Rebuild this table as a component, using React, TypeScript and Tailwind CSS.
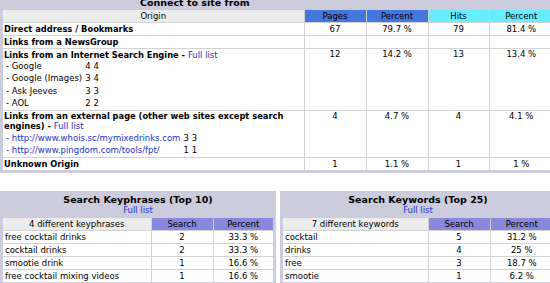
const origins = [
  { label: 'Direct address / Bookmarks', pages: '67', pp: '79.7 %', hits: '79', hp: '81.4 %' },
  { label: 'Links from a NewsGroup', pages: '', pp: '', hits: '', hp: '' },
];

const engines = [
  ['- Google', '4', '4'],
  ['- Google (Images)', '3', '4'],
  ['- Ask Jeeves', '3', '3'],
  ['- AOL', '2', '2'],
];

const referers = [
  ['- http://www.whois.sc/mymixedrinks.com', '3', '3'],
  ['- http://www.pingdom.com/tools/fpt/', '1', '1'],
];

const keyphrases = [
  ['free cocktail drinks', '2', '33.3 %'],
  ['cocktail drinks', '2', '33.3 %'],
  ['smootie drink', '1', '16.6 %'],
  ['free cocktail mixing videos', '1', '16.6 %'],
];

const keywords = [
  ['cocktail', '5', '31.2 %'],
  ['drinks', '4', '25 %'],
  ['free', '3', '18.7 %'],
  ['smootie', '1', '6.2 %'],
];

function Nums({ pages, pp, hits, hp, top, last }: { pages: string; pp: string; hits: string; hp: string; top?: boolean; last?: boolean }) {
  const cls = `border-l border-[#d2d2d2] text-center p-0 ${last ? '' : 'border-b'} ${top ? 'align-top' : 'align-middle'}`;
  return (
    <>
      <td className={cls}>{pages}</td>
      <td className={cls}>{pp}</td>
      <td className={cls}>{hits}</td>
      <td className={cls}>{hp}</td>
    </>
  );
}

function SubList({ rows, link, rowH }: { rows: string[][]; link?: boolean; rowH: string }) {
  return (
    <table className="font-normal text-[8.5px]">
      <tbody>
        {rows.map((r) => (
          <tr key={r[0]} className={rowH}>
            <td className={`p-0 pl-[2px] pr-[3px] ${link ? 'text-[#2233cc]' : ''}`}>{r[0]}</td>
            <td className="p-0 pr-[3px]">{r[1]}</td>
            <td className="p-0">{r[2]}</td>
          </tr>
        ))}
      </tbody>
    </table>
  );
}

function ConnectTable() {
  return (
    <div className="w-[556px] bg-[#ccccdd] -mt-[10px] pl-[3px] pb-[3px]">
      <div className="h-[20px] pt-[5px] leading-[16px] pl-[137px] text-[9.5px] font-bold">Connect to site from</div>
      <table className="w-[550px] table-fixed bg-white leading-[10px] text-[8.5px]">
        <colgroup>
          <col className="w-[301px]" />
          <col className="w-[62px]" />
          <col className="w-[62px]" />
          <col className="w-[61px]" />
          <col className="w-[64px]" />
        </colgroup>
        <tbody>
          <tr className="h-[12px]">
            <td className="bg-[#ececec] text-center p-0 border-b border-[#d2d2d2]">Origin</td>
            <td className="bg-[#4477dd] text-center p-0 border-l border-b border-[#d2d2d2]">Pages</td>
            <td className="bg-[#4477dd] text-center p-0 border-l border-b border-[#d2d2d2]">Percent</td>
            <td className="bg-[#66eeff] text-center p-0 border-l border-b border-[#d2d2d2]">Hits</td>
            <td className="bg-[#66eeff] text-center p-0 border-l border-b border-[#d2d2d2]">Percent</td>
          </tr>
          {origins.map((o) => (
            <tr key={o.label} className="h-[13px]">
              <td className="font-bold text-[8.3px] p-0 pl-[1px] border-b border-[#d2d2d2]">{o.label}</td>
              <Nums {...o} />
            </tr>
          ))}
          <tr className="h-[62px]">
            <td className="font-bold text-[8.3px] p-0 pl-[1px] align-top border-b border-[#d2d2d2]">
              <div className="pt-[1px]">
                Links from an Internet Search Engine - <span className="font-normal text-[8.5px] text-[#2233cc]">Full list</span>
              </div>
              <SubList rows={engines} rowH="h-[12.5px]" />
            </td>
            <Nums pages="12" pp="14.2 %" hits="13" hp="13.4 %" top />
          </tr>
          <tr className="h-[47px]">
            <td className="font-bold text-[8.3px] p-0 pl-[1px] align-top border-b border-[#d2d2d2]">
              <div>
                Links from an external page (other web sites except search engines) -{' '}
                <span className="font-normal text-[8.5px] text-[#2233cc]">Full list</span>
              </div>
              <div className="pt-[1px]">
                <SubList rows={referers} link rowH="h-[12px]" />
              </div>
            </td>
            <Nums pages="4" pp="4.7 %" hits="4" hp="4.1 %" top />
          </tr>
          <tr className="h-[13px]">
            <td className="font-bold text-[8.3px] p-0 pl-[1px]">Unknown Origin</td>
            <Nums pages="1" pp="1.1 %" hits="1" hp="1 %" last />
          </tr>
        </tbody>
      </table>
    </div>
  );
}

function SearchTable({ title, count, rows, nameW }: { title: string; count: string; rows: string[][]; nameW: string }) {
  return (
    <div className="w-[276px] shrink-0 bg-[#ccccdd] px-[3px] pb-[3px]">
      <div className="pt-[3px] pb-[3px] text-center">
        <div className="text-[9.5px] font-bold leading-[12px]">{title}</div>
        <div className="text-[#2233cc] text-[8.5px] leading-[9px]">Full list</div>
      </div>
      <table className="w-[270px] table-fixed bg-white leading-[10px] text-[8.5px]">
        <colgroup>
          <col className={nameW} />
          <col className="w-[62px]" />
          <col />
        </colgroup>
        <tbody>
          <tr className="h-[12px]">
            <td className="bg-[#ececec] text-center p-0 border-b border-[#d2d2d2]">{count}</td>
            <td className="bg-[#8888dd] text-center p-0 border-l border-b border-[#d2d2d2]">Search</td>
            <td className="bg-[#8888dd] text-center p-0 border-l border-b border-[#d2d2d2]">Percent</td>
          </tr>
          {rows.map((r, i) => (
            <tr key={r[0]} className="h-[13px]">
              <td className={`p-0 pl-[2px] border-[#d2d2d2] ${i < rows.length - 1 ? 'border-b' : ''}`}>{r[0]}</td>
              <td className={`p-0 text-center border-l border-[#d2d2d2] ${i < rows.length - 1 ? 'border-b' : ''}`}>{r[1]}</td>
              <td className={`p-0 text-center border-l border-[#d2d2d2] ${i < rows.length - 1 ? 'border-b' : ''}`}>{r[2]}</td>
            </tr>
          ))}
        </tbody>
      </table>
    </div>
  );
}

export default function App() {
  return (
    <div className="w-[550px] h-[283px] overflow-hidden bg-white text-black font-['DejaVu_Sans',Verdana,sans-serif] text-[8.5px]">
      <ConnectTable />
      <div className="flex gap-[4px] mt-[18px]">
        <SearchTable title="Search Keyphrases (Top 10)" count="4 different keyphrases" rows={keyphrases} nameW="w-[148px]" />
        <SearchTable title="Search Keywords (Top 25)" count="7 different keywords" rows={keywords} nameW="w-[145px]" />
      </div>
    </div>
  );
}
